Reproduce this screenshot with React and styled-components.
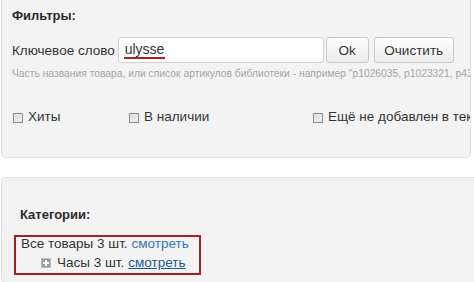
import styled, { createGlobalStyle } from "styled-components";

const Global = createGlobalStyle`
    html, body {
        margin: 0;
        padding: 0;
        background: #ffffff;
        overflow: hidden;
    }
    body {
        width: 474px;
        height: 282px;
        font-family: "Liberation Sans", Arial, sans-serif;
        color: #333333;
    }
`;

const Page = styled.div`
    display: flex;
    flex-direction: column;
    gap: 19px;
`;

const Panel = styled.div`
    box-sizing: border-box;
    background: #f3f3f3;
    border: 1px solid #e1e1e1;
    border-radius: 4px;
    margin-left: 1px;
`;

const FilterPanel = styled(Panel)`
    width: 470px;
    margin-top: -6px;
    padding: 13px 0 32px 10px;
    overflow: hidden;
`;

const CategoryPanel = styled(Panel)`
    margin-right: -10px;
    height: 106px;
    padding: 29px 0 0 10px;
`;

const Title = styled.div`
    font-size: 13px;
    font-weight: bold;
    line-height: 16px;
    color: #2b2b2b;
    margin-left: ${(p) => p.indent || 0}px;
`;

const SearchRow = styled.div`
    display: flex;
    align-items: center;
    margin-top: 13px;
    height: 26px;
`;

const Label = styled.span`
    font-size: 13.5px;
    margin-right: 3px;
    white-space: nowrap;
`;

const InputBox = styled.div`
    box-sizing: border-box;
    width: 206px;
    height: 26px;
    background: #ffffff;
    border: 1px solid #cfcfcf;
    border-radius: 3px;
    padding: 0 5px;
    display: flex;
    align-items: center;
    font-size: 14px;
    color: #333333;
`;

const Misspelled = styled.span`
    display: inline-block;
    line-height: 15px;
    border-bottom: 2px solid #b21d1d;
    padding: 0 1px;
`;

const Button = styled.button`
    box-sizing: border-box;
    height: 26px;
    width: ${(p) => p.w}px;
    margin-left: ${(p) => p.gap}px;
    font-family: inherit;
    font-size: 13.5px;
    color: #333333;
    background: linear-gradient(#ffffff, #ececec);
    border: 1px solid #c9c9c9;
    border-radius: 3px;
    padding: 0;
`;

const Hint = styled.div`
    margin-top: 5px;
    font-size: 10.3px;
    line-height: 12px;
    color: #a5a5a5;
    white-space: nowrap;
`;

const CheckRow = styled.div`
    display: flex;
    margin-top: 28px;
    height: 17px;
    white-space: nowrap;
`;

const CheckItem = styled.label`
    display: flex;
    align-items: flex-end;
    width: ${(p) => p.w}px;
    flex-shrink: 0;
    font-size: 13.5px;
    line-height: 17px;
`;

const Box = styled.span`
    box-sizing: border-box;
    flex-shrink: 0;
    width: 10px;
    height: 10px;
    margin: 0 5px 2px 1px;
    border: 1px solid #8d8d8d;
    background: linear-gradient(135deg, #d4d4d4, #f7f7f7);
    box-shadow: inset 0 0 0 1px #e9e9e9;
`;

const Marked = styled.div`
    box-sizing: border-box;
    width: 187px;
    margin: 12px 0 0 2px;
    border: 2px solid #a51f23;
    padding: 0 0 3px 5px;
    font-size: 13.5px;
`;

const CatRow = styled.div`
    display: flex;
    align-items: center;
    line-height: 14px;
    margin-top: ${(p) => (p.sub ? 5 : 0)}px;
    padding-left: ${(p) => (p.sub ? 20 : 0)}px;
    white-space: nowrap;
`;

const Link = styled.a`
    color: ${(p) => (p.dark ? "#1c5b8c" : "#3579b6")};
    text-decoration: ${(p) => (p.dark ? "underline" : "none")};
    margin-left: 4px;
`;

const Expand = styled.span`
    box-sizing: border-box;
    width: 10px;
    height: 10px;
    margin-right: 6px;
    background: #9a9a9a;
    border: 1px solid #bdbdbd;
    display: flex;
    align-items: center;
    justify-content: center;
`;

const PlusIcon = () => (
    <svg width="6" height="6" viewBox="0 0 6 6">
        <path d="M3 0v6M0 3h6" stroke="#ffffff" strokeWidth="2" />
    </svg>
);

const App = () => {
    return (
        <>
            <Global />
            <Page>
                <FilterPanel>
                    <Title>Фильтры:</Title>
                    <SearchRow>
                        <Label>Ключевое слово</Label>
                        <InputBox>
                            <Misspelled>ulysse</Misspelled>
                        </InputBox>
                        <Button w={43} gap={2}>Ok</Button>
                        <Button w={80} gap={5}>Очистить</Button>
                    </SearchRow>
                    <Hint>
                        Часть названия товара, или список артикулов библиотеки - например "p1026035, p1023321, p4312345"
                    </Hint>
                    <CheckRow>
                        <CheckItem w={116}>
                            <Box />
                            Хиты
                        </CheckItem>
                        <CheckItem w={184}>
                            <Box />
                            В наличии
                        </CheckItem>
                        <CheckItem w={200}>
                            <Box />
                            Ещё не добавлен в текущий заказ
                        </CheckItem>
                    </CheckRow>
                </FilterPanel>
                <CategoryPanel>
                    <Title indent={8}>Категории:</Title>
                    <Marked>
                        <CatRow>
                            Все товары 3 шт.
                            <Link>смотреть</Link>
                        </CatRow>
                        <CatRow sub>
                            <Expand>
                                <PlusIcon />
                            </Expand>
                            Часы 3 шт.
                            <Link dark>смотреть</Link>
                        </CatRow>
                    </Marked>
                </CategoryPanel>
            </Page>
        </>
    );
};

export default App;
